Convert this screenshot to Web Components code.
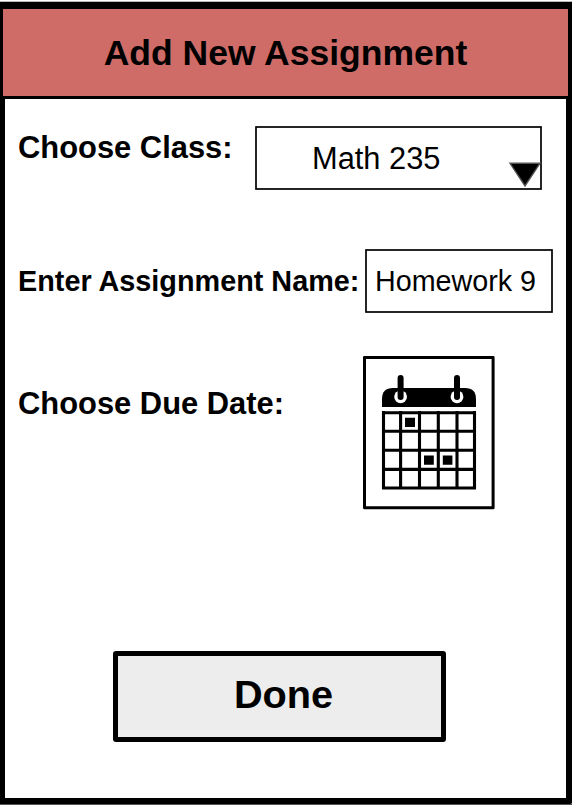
<!DOCTYPE html>
<html lang="en">
<head>
<meta charset="utf-8">
<title>Add New Assignment</title>
<style>
html, body { margin: 0; background: #fff; }
body { font-family: "Liberation Sans", Arial, sans-serif; color: #000; width: 572px; height: 810px; overflow: hidden; }
</style>
</head>
<body>
<assignment-screen></assignment-screen>
<script>
const define = (name, html, setup) => customElements.define(name, class extends HTMLElement {
  constructor() {
    super();
    this.attachShadow({ mode: 'open' }).innerHTML = html;
  }
  connectedCallback() { if (setup) setup(this, this.shadowRoot); }
});

// Title bar
define('title-bar', `<style>
:host { display: flex; align-items: center; justify-content: center; box-sizing: border-box; height: 97px;
  background: #d06c67; border: solid #000; border-width: 7px 4px 3px 3px; }
h1 { margin: 0; font-size: 35.5px; line-height: 40px; font-weight: bold; white-space: nowrap; }
</style><h1><slot></slot></h1>`);

// Label beside its control
define('form-row', `<style>
:host { display: flex; align-items: flex-start; }
.label { box-sizing: border-box; padding-left: 1px; width: var(--label-width); padding-top: var(--label-top); font-weight: bold; font-size: var(--label-size, 30.9px); line-height: 36px; white-space: nowrap; flex: none; }
</style><div class="label"><slot name="label"></slot></div><slot></slot>`);

// Outlined box, optionally with a drop-down arrow
define('outline-box', `<style>
:host { display: grid; flex: none; }
svg, .value { grid-area: 1 / 1; }
svg { width: 100%; height: 100%; display: block; }
.value { display: flex; align-items: center; padding-left: var(--inset); padding-top: var(--drop, 0); font-size: var(--value-size); line-height: 36px; white-space: nowrap; }
.arrow { display: none; }
:host([arrow]) .arrow { display: block; }
</style>
<svg aria-hidden="true"><rect x="1" y="1" fill="#fff" stroke="#000" stroke-width="1.7"/>
<path class="arrow" d="M255 37.3H285L270 60Z" fill="#000" stroke="#555" stroke-width="1.4"/></svg>
<div class="value"><slot></slot></div>`, (el, root) => {
  const r = root.querySelector('rect');
  r.setAttribute('width', el.getAttribute('w') - 2);
  r.setAttribute('height', el.getAttribute('h') - 2);
  el.style.width = el.getAttribute('w') + 'px';
  el.style.height = el.getAttribute('h') + 'px';
});

// Calendar picture button
define('calendar-button', `<style>
:host { display: block; width: 132px; height: 154px; flex: none; }
svg { display: block; }
</style>
<svg width="132" height="154" viewBox="363 356 132 154" aria-label="Calendar">
<rect x="364.5" y="357.4" width="128.6" height="150.4" fill="#fff" stroke="#000" stroke-width="3" stroke-linejoin="round"/>
<path d="M382 407V399Q382 388 393 388H465Q476 388 476 399V407Z"/>
<g fill="#fff"><circle cx="400.6" cy="396.8" r="6.4"/><circle cx="457" cy="396.8" r="6.4"/></g>
<path d="M400.6 378V397M457 378V397" stroke="#000" stroke-width="6" stroke-linecap="round"/>
<path d="M383.5 411V489.5M400.6 411V489.5M419.5 411V489.5M438.3 411V489.5M457 411V489.5M474.5 411V489.5M382 412.7H476M382 431.3H476M382 450.3H476M382 469.4H476M382 488H476" stroke="#000" stroke-width="3.1" fill="none"/>
<path d="M405 417.8h10v9.2h-10zM424 455.4h9.8v9.4h-9.8zM442.8 455.4h9.6v9.4h-9.6z"/>
</svg>`);

// Large action button
define('action-button', `<style>
:host { display: block; }
button { display: flex; align-items: center; justify-content: center; box-sizing: border-box; width: 333px; height: 91px; margin: 0; padding: 0 0 6px 8px;
  border: 5px solid #000; border-radius: 3px; background: #ededed; color: #000; font: bold 39.7px/46px "Liberation Sans", Arial, sans-serif; }
</style><button><slot></slot></button>`);

define('assignment-screen', `<style>
:host { display: block; box-sizing: border-box; height: 810px; padding-top: 1px; }
.edge { height: 1px; background: #b4b8b8; }
main { box-sizing: border-box; height: 705px; border: solid #000; border-width: 0 6px 6px 5px; padding: 27px 0 0 12px; background: #fff; border-bottom-right-radius: 2px; }
form-row { --label-width: 238px; --label-top: 4px; height: 123px; }
.name { --label-width: 348px; --label-size: 28.8px; --label-top: 14px; height: 107px; }
.date { --label-width: 346px; --label-top: 30px; height: 295px; }
.class outline-box { --inset: 57px; --value-size: 30.8px; --drop: 2px; }
.name outline-box { --inset: 10px; --value-size: 28.7px; }
action-button { margin-left: 96px; }
.foot { height: 1px; background: #555; }
</style>
<div class="edge"></div>
<title-bar>Add New Assignment</title-bar>
<main>
<form-row class="class"><span slot="label">Choose Class:</span><outline-box arrow w="287" h="64">Math 235</outline-box></form-row>
<form-row class="name"><span slot="label">Enter Assignment Name:</span><outline-box w="188" h="64">Homework 9</outline-box></form-row>
<form-row class="date"><span slot="label">Choose Due Date:</span><calendar-button></calendar-button></form-row>
<action-button>Done</action-button>
</main>
<div class="foot"></div>`);
</script>
</body>
</html>
